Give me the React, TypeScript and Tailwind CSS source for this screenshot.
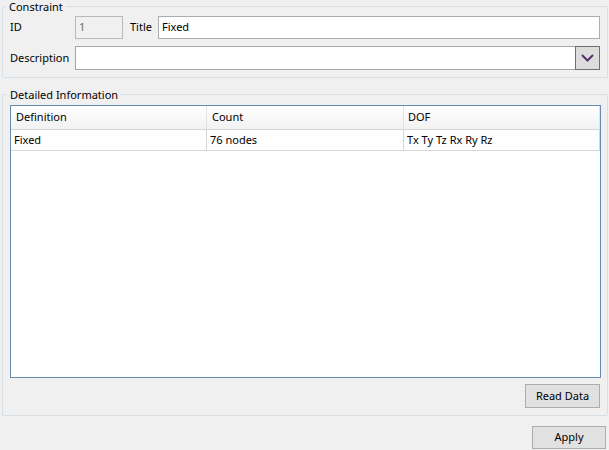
import React from "react";

const font = { fontFamily: '"Noto Sans", "Open Sans", sans-serif' };

export default function App() {
  return (
    <div
      className="w-[609px] h-[450px] bg-[#f0f0f0] text-[11px] text-black overflow-hidden relative"
      style={font}
    >
      {/* Constraint group */}
      <fieldset className="ml-[2px] w-[606px] h-[78px] border border-[#d5dfe5] rounded-[2px] px-[6px] pt-[3px]">
        <legend className="-ml-[3px] px-[3px] leading-[13px]">Constraint</legend>
        <div className="flex flex-col gap-[7px]">
          <div className="flex items-center h-[23px]">
            <span className="w-[66px] pl-[1px]">ID</span>
            <div className="w-[48px] h-[23px] border border-[#b9b9b9] bg-[#f0f0f0] text-[#6d6d6d] flex items-center px-[3px]">
              1
            </div>
            <span className="ml-[7px] w-[28px]">Title</span>
            <div className="w-[442px] h-[23px] border border-[#abadb3] bg-white flex items-center px-[3px]">
              Fixed
            </div>
          </div>
          <div className="flex items-center h-[24px]">
            <span className="w-[66px] pl-[1px]">Description</span>
            <div className="w-[525px] h-[24px] border border-[#a5a5a5] bg-white flex justify-end">
              <div className="w-[25px] h-[24px] -mt-[1px] -mr-[1px] border border-[#707070] bg-[#dddddd] flex items-center justify-center">
                <svg width="13" height="8" viewBox="0 0 13 8">
                  <path d="M1 1 L6.5 6.5 L12 1" fill="none" stroke="#56306f" strokeWidth="2" />
                </svg>
              </div>
            </div>
          </div>
        </div>
      </fieldset>

      {/* Detailed Information group */}
      <fieldset className="mt-[10px] ml-[2px] w-[606px] h-[328px] border border-[#d5dfe5] rounded-[2px] pl-[6px] pr-[6px] pt-[4px]">
        <legend className="-ml-[2px] px-[3px] leading-[13px]">Detailed Information</legend>
        <div className="flex flex-col items-end gap-[6px]">
          <div className="w-[591px] h-[273px] border border-[#688caf] bg-white flex flex-col">
            <div className="flex h-[24px] border-b border-[#d5d5d5] bg-gradient-to-b from-white to-[#f2f2f2]">
              <div className="w-[196px] border-r border-[#e2e2e2] flex items-center pl-[5px]">Definition</div>
              <div className="w-[197px] border-r border-[#e2e2e2] flex items-center pl-[5px]">Count</div>
              <div className="w-[196px] border-r border-[#e2e2e2] flex items-center pl-[4px]">DOF</div>
            </div>
            <div className="flex h-[21px] border-b border-[#d5d5d5]">
              <div className="w-[196px] border-r border-[#d5d5d5] flex items-center pl-[3px]">Fixed</div>
              <div className="w-[197px] border-r border-[#d5d5d5] flex items-center pl-[3px]">76 nodes</div>
              <div className="w-[196px] border-r border-[#d5d5d5] flex items-center pl-[3px]">Tx Ty Tz Rx Ry Rz</div>
            </div>
          </div>
          <button className="w-[75px] h-[24px] mr-[1px] border border-[#adadad] bg-[#e1e1e1] flex items-center justify-center">
            Read Data
          </button>
        </div>
      </fieldset>

      <div className="flex justify-end pr-[3px] mt-[10px]">
        <button className="w-[74px] h-[23px] border border-[#adadad] bg-[#e1e1e1] flex items-center justify-center">
          Apply
        </button>
      </div>
    </div>
  );
}
